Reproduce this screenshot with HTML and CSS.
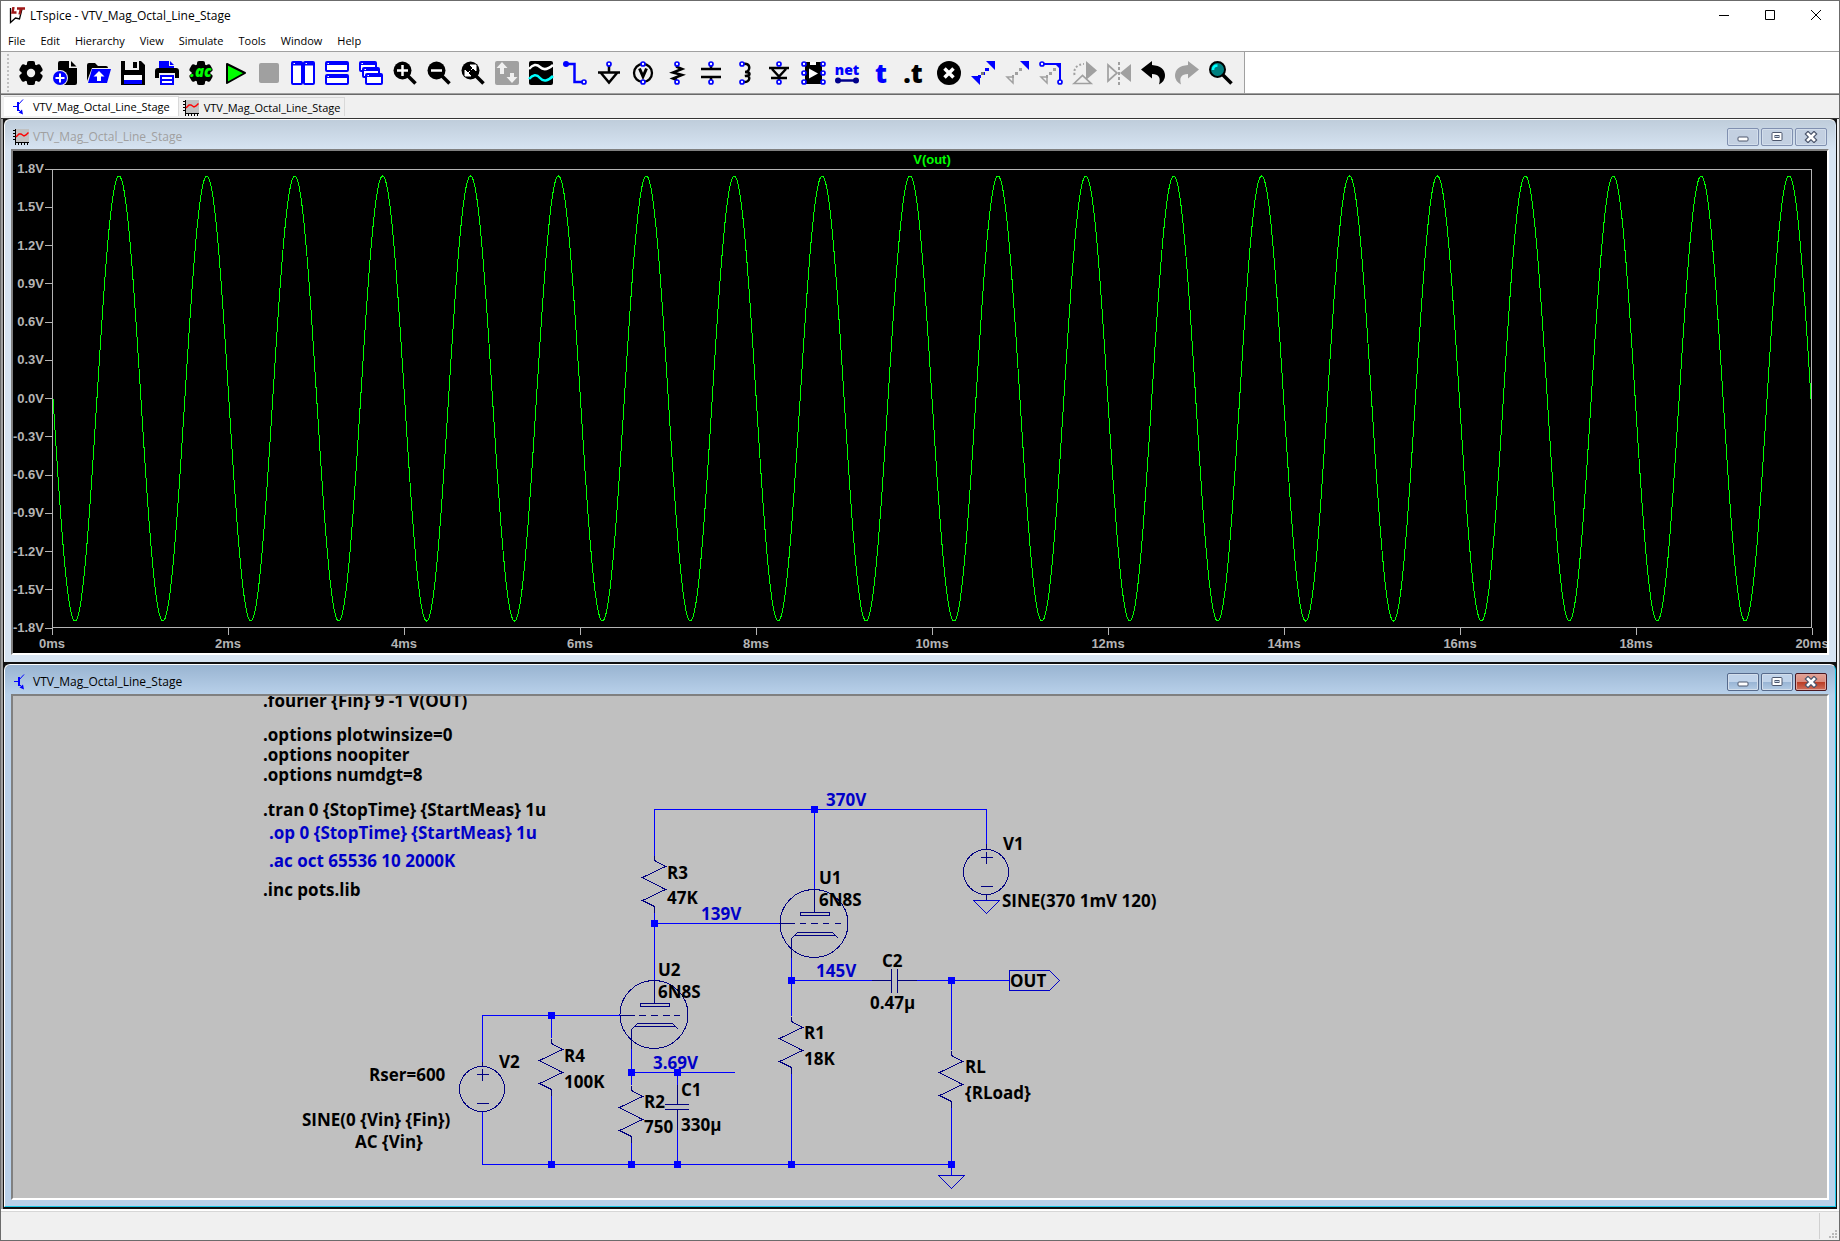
FILE: index.html
```html
<!DOCTYPE html>
<html lang="en">
<head>
<meta charset="utf-8">
<title>LTspice - VTV_Mag_Octal_Line_Stage</title>
<link rel="stylesheet" href="styles.css">
</head>
<body>
<svg class="defs" aria-hidden="true">
  <defs>
    <symbol id="i-schematic" viewBox="0 0 16 16"><path d="M1 7.500H5M5.500 3V12M5.500 6.500L11 .5M5.500 9.500L8 12" fill="none" stroke="#00f"/><path d="M5 3h2v9H5zM11 15.500L6.500 13.500L10 10.500z" fill="#00f"/></symbol>
    <symbol id="i-plot" viewBox="0 0 16 16"><path d="M2 0h14v13H2z" fill="#c0c0c0"/><path d="M2.500 0V16M2 13.500H16M0 1.500h2M0 4.500h2M0 7.500h2M0 10.500h2M5.500 14v2M8.500 14v2M11.500 14v2M14.500 14v2" stroke="#000" fill="none"/><path d="M3 8L6 5L8 5L11 7L13 6L15.500 3.500" stroke="#f00" stroke-width="1.500" fill="none"/></symbol>
    <symbol id="g-min" viewBox="0 0 14 12"><rect x="2" y="6" width="10" height="4" rx="1" fill="#fff" stroke="#4c566c"/></symbol>
    <symbol id="g-max" viewBox="0 0 14 12"><rect x="2" y="1.500" width="10" height="8" rx="1" fill="#fff" stroke="#4c566c"/><rect x="5" y="4.500" width="4" height="2" fill="#c8d6e8" stroke="#4c566c"/></symbol>
    <symbol id="g-close" viewBox="0 0 14 12"><path d="M4 3L10 9M10 3L4 9" stroke="#4c566c" stroke-width="5" stroke-linecap="square"/><path d="M4 3L10 9M10 3L4 9" stroke="#fff" stroke-width="2.600" stroke-linecap="square"/></symbol>
    <g id="s-res" class="part"><path d="M0 -5V0L11 6L-12 17L11 29L-12 40L0 46V52"/></g>
    <g id="s-src" class="part"><circle cx="0" cy="0" r="22.500"/><path d="M-5 -14.500H7M.5 -20V-8M-5 14.500H7"/></g>
    <g id="s-tube" class="part"><circle cx="0" cy="0" r="34"/><path d="M.5 -34V-11.500M-13.500 -11.500H15V-8H-13.500ZM-22.500 34V15L-16.500 9H18.500L24.500 15M-19.500 12H21.500"/></g>
    <rect id="s-node" x="-3.500" y="-3.500" width="7" height="7" fill="#00f"/>
    <g id="lens"><circle cx="9.500" cy="9.500" r="9"/><path d="M15 15L22.500 22.500" stroke="#000" stroke-width="3.500"/></g>
    <circle id="pin" r="2" fill="#fff" stroke="#00f" stroke-width="1.700"/>
  </defs>
</svg>
<div class="app">
  <header class="titlebar">
    <svg class="logo" viewBox="0 0 18 18"><path d="M2.500 1V15.500L7.500 11L11.500 12L14 2" fill="none" stroke="#000" stroke-width="1.300"/><path d="M5.500 0L4.500 5.500H8.500M9 1.500H17M13 1.500L11.500 7.500" fill="none" stroke="#a01818" stroke-width="2.400"/></svg>
    <h1>LTspice - VTV_Mag_Octal_Line_Stage</h1>
    <div class="caption">
      <button aria-label="Minimize"><svg viewBox="0 0 12 12"><path d="M1 6.500H11"/></svg></button>
      <button aria-label="Maximize"><svg viewBox="0 0 12 12"><path d="M1.500 1.500H10.500V10.500H1.500Z"/></svg></button>
      <button aria-label="Close"><svg viewBox="0 0 12 12"><path d="M1 1L11 11M11 1L1 11"/></svg></button>
    </div>
  </header>
  <nav class="menu">
    <button>File</button><button>Edit</button><button>Hierarchy</button><button>View</button><button>Simulate</button><button>Tools</button><button>Window</button><button>Help</button>
  </nav>
  <div class="toolrow">
    <div class="toolbar" role="toolbar">
      <button aria-label="Settings"><svg viewBox="0 0 24 24"><circle cx="12" cy="12" r="9.500"/><g><rect x="8" width="8" height="24" rx="2"/><rect x="8" width="8" height="24" rx="2" transform="rotate(60 12 12)"/><rect x="8" width="8" height="24" rx="2" transform="rotate(120 12 12)"/></g><circle cx="12" cy="12" r="4.200" fill="#f0f0f0"/></svg></button>
      <button aria-label="New schematic"><svg viewBox="0 0 24 24"><path d="M5 2Q5 0 7 0H16V7H24V22Q24 24 22 24H7L5 20Z"/><path d="M18 0L23.500 5.500H18Z"/><circle cx="7" cy="17" r="8" fill="#f0f0f0"/><circle cx="7" cy="17" r="7" fill="#00f"/><path d="M7 12.500V21.500M2.500 17H11.500" stroke="#fff" stroke-width="2"/></svg></button>
      <button aria-label="Open"><svg viewBox="0 0 24 24"><path d="M0 20V4Q0 2 2 2H8L11 5H19Q21 5 21 7H5Z"/><path d="M5 8H24L20 22H1Z" fill="#00f"/><path d="M12 10L17.500 15.500H14V20H10V15.500H6.500Z" fill="#fff"/></svg></button>
      <button aria-label="Save"><svg viewBox="0 0 24 24"><path d="M0 0H20L24 4V24H0Z"/><path d="M4 0H18V9H4Z" fill="#f0f0f0"/><path d="M12 1H16V7H12Z"/><path d="M3 14H21V22H3Z" fill="#fff"/><path d="M3 19H21V23H3Z" fill="#00f"/></svg></button>
      <button aria-label="Print"><svg viewBox="0 0 24 24"><path d="M4 0H14V5H19V7H4ZM15 0L19 4H15Z" fill="#00f"/><path d="M0 10Q0 7 3 7H21Q24 7 24 10V17H20V12H4V17H0Z"/><rect x="5" y="14" width="14" height="10" fill="#00f"/><path d="M7 17H17M7 21H17" stroke="#fff" stroke-width="2"/></svg></button>
      <button aria-label="AC analysis"><svg viewBox="0 0 24 24"><circle cx="12" cy="12" r="9.500"/><rect x="8" width="8" height="24" rx="2"/><rect x="8" width="8" height="24" rx="2" transform="rotate(60 12 12)"/><rect x="8" width="8" height="24" rx="2" transform="rotate(120 12 12)"/><text class="ac" x="12" y="16">.ac</text></svg></button>
      <button aria-label="Run"><svg viewBox="0 0 24 24"><path d="M4 3L22 12L4 22Z" fill="#0f0" stroke="#000" stroke-width="2" stroke-linejoin="round"/></svg></button>
      <button aria-label="Stop" disabled><svg viewBox="0 0 24 24"><rect x="2" y="2" width="20" height="20" rx="2" fill="#a0a0a0"/></svg></button>
      <button aria-label="Tile vertically"><svg viewBox="0 0 24 24"><g class="win"><rect x="1" y="1" width="10" height="22" rx="1"/><rect x="13" y="1" width="10" height="22" rx="1"/></g><path d="M1 3H23" stroke="#00f" stroke-width="3"/><path d="M2.500 2.500H4M14.500 2.500H16" stroke="#fff"/></svg></button>
      <button aria-label="Tile horizontally"><svg viewBox="0 0 24 24"><g class="win"><rect x="1" y="1" width="22" height="9" rx="1"/><rect x="1" y="14" width="22" height="9" rx="1"/></g><path d="M1 2.500H23M1 15.500H23" stroke="#00f" stroke-width="3"/><path d="M2.500 2.500H4M2.500 15.500H4" stroke="#fff"/></svg></button>
      <button aria-label="Cascade"><svg viewBox="0 0 24 24"><g class="win"><rect x="1" y="1" width="16" height="9" rx="1"/><rect x="4" y="7" width="16" height="9" rx="1"/><rect x="7" y="13" width="16" height="10" rx="1"/></g><path d="M1 2.500H17M4 8.500H20M7 14.500H23" stroke="#00f" stroke-width="3"/><path d="M2.500 2.500H4M5.500 8.500H7M8.500 14.500H10" stroke="#fff"/></svg></button>
      <button aria-label="Zoom in"><svg viewBox="0 0 24 24"><use href="#lens"/><path d="M9.500 4V15M4 9.500H15" stroke="#fff" stroke-width="2.500"/></svg></button>
      <button aria-label="Zoom out"><svg viewBox="0 0 24 24"><use href="#lens"/><path d="M4 9.500H15" stroke="#fff" stroke-width="2.500"/></svg></button>
      <button aria-label="Zoom to fit"><svg viewBox="0 0 24 24"><use href="#lens"/><path d="M9 4H15V10ZM4 9V15H10ZM6 13L13 6" fill="#fff" stroke="#fff"/><path d="M8 8L11 11" stroke="#000" stroke-width="1.500"/></svg></button>
      <button aria-label="Autorange" disabled><svg viewBox="0 0 24 24"><rect width="24" height="24" rx="2" fill="#a0a0a0"/><path d="M7 1L12.500 7H9V13H5V7H1.500ZM17 22L22.500 16H19V12H15V16H11.500Z" fill="#f0f0f0"/></svg></button>
      <button aria-label="Waveforms"><svg viewBox="0 0 24 24"><rect width="24" height="24" rx="2"/><path d="M0 8Q6 1 11 6T24 4" fill="none" stroke="#fff" stroke-width="2.500"/><path d="M0 18Q6 11 11 17T24 15" fill="none" stroke="#0ff" stroke-width="2.500"/></svg></button>
      <button aria-label="Wire"><svg viewBox="0 0 24 24"><path d="M3 3H11.500V21H20" fill="none" stroke="#00f" stroke-width="2.500"/><circle cx="3" cy="3" r="3" fill="#00f"/><use href="#pin" x="21" y="21"/></svg></button>
      <button aria-label="Ground"><svg viewBox="0 0 24 24"><path d="M12 4V12M1 11.500H23M4 12L12 21.500L20 12" fill="none" stroke="#000" stroke-width="2.500"/><use href="#pin" x="12" y="3"/></svg></button>
      <button aria-label="Voltage source"><svg viewBox="0 0 24 24"><circle cx="12" cy="12" r="9" fill="none" stroke="#000" stroke-width="2.300"/><path d="M8.500 7.500L12 15.500L15.500 7.500" fill="none" stroke="#000" stroke-width="3"/><use href="#pin" x="12" y="3"/><use href="#pin" x="12" y="21"/></svg></button>
      <button aria-label="Resistor"><svg viewBox="0 0 24 24"><path d="M12 4V6L17 8L8 11.500L17 14L8 17.500L12 19" fill="none" stroke="#000" stroke-width="2.500"/><use href="#pin" x="12" y="3"/><use href="#pin" x="12" y="21"/></svg></button>
      <button aria-label="Capacitor"><svg viewBox="0 0 24 24"><path d="M2 8H22M2 16H22M12 5V8M12 16V19" stroke="#000" stroke-width="2.500"/><use href="#pin" x="12" y="3"/><use href="#pin" x="12" y="21"/></svg></button>
      <button aria-label="Inductor"><svg viewBox="0 0 24 24"><path d="M10 3C18 1 18 11 12 11C18 11 18 15 12 15C18 13 18 22 10 21" fill="none" stroke="#000" stroke-width="2.500"/><use href="#pin" x="9" y="3"/><use href="#pin" x="9" y="21"/></svg></button>
      <button aria-label="Diode"><svg viewBox="0 0 24 24"><path d="M2 7H22M5 8L12 15.500L19 8M4 17H20M12 15V19" fill="none" stroke="#000" stroke-width="2.500"/><use href="#pin" x="12" y="3"/><use href="#pin" x="12" y="21"/></svg></button>
      <button aria-label="Component"><svg viewBox="0 0 24 24"><rect x="4" y="1" width="17" height="22"/><path d="M9 1V4H15V1" fill="#fff"/><path d="M8 7.500L17 12.500L8 17.500Z" fill="#fff"/><g><use href="#pin" x="3" y="3"/><use href="#pin" x="3" y="12"/><use href="#pin" x="3" y="21"/><use href="#pin" x="22" y="3"/><use href="#pin" x="22" y="12"/><use href="#pin" x="22" y="21"/></g></svg></button>
      <button aria-label="Label net"><svg viewBox="0 0 24 24"><text class="net" x="12" y="14">net</text><path d="M2 19.500H22" stroke="#00008b" stroke-width="2.500"/><circle cx="3" cy="19.500" r="3" fill="#00008b"/><circle cx="21" cy="19.500" r="3" fill="#00008b"/></svg></button>
      <button aria-label="Text"><svg viewBox="0 0 24 24"><text class="t blue" x="12" y="22">t</text></svg></button>
      <button aria-label="SPICE directive"><svg viewBox="0 0 24 24"><text class="t" x="10" y="22">.t</text></svg></button>
      <button aria-label="Delete"><svg viewBox="0 0 24 24"><circle cx="12" cy="12" r="12"/><path d="M7.500 7.500L16.500 16.500M16.500 7.500L7.500 16.500" stroke="#fff" stroke-width="3.500"/></svg></button>
      <button aria-label="Move"><svg viewBox="0 0 24 24"><path d="M15 0H24V9ZM0 15H9V24Z" fill="#00f"/><path d="M10 11H14V14H10ZM14 7H18V10H14ZM7 14H10V17H7Z" fill="#00f"/><path d="M10 11H13V14H10Z" fill="#777"/></svg></button>
      <button aria-label="Duplicate"><svg viewBox="0 0 24 24"><path d="M15 0H24V9Z" fill="#00f"/><path d="M14 7H17V10H14ZM10 11H13V14H10ZM7 14H9V17H7Z" fill="#a0a0a0"/><path d="M2 16H8V22Z" fill="none" stroke="#a0a0a0" stroke-width="1.500"/></svg></button>
      <button aria-label="Drag"><svg viewBox="0 0 24 24"><path d="M3 3H21V20" fill="none" stroke="#00f" stroke-width="2"/><path d="M15 2H22V9Z" fill="#00f"/><path d="M14 7H17V10H14ZM10 11H13V14H10ZM7 14H9V17H7Z" fill="#a0a0a0"/><path d="M2 16H8V22Z" fill="none" stroke="#a0a0a0" stroke-width="1.500"/><use href="#pin" x="3" y="3"/><use href="#pin" x="21" y="21"/></svg></button>
      <button aria-label="Rotate" disabled><svg viewBox="0 0 24 24"><path d="M13 0L24 9.500L13 19Z" fill="#a0a0a0"/><path d="M1.500 14Q0 4 11 3" fill="none" stroke="#a0a0a0" stroke-width="2" stroke-dasharray="2 2"/><path d="M1 22.500L9.500 14.500L18 22.500Z" fill="#f0f0f0" stroke="#a0a0a0" stroke-width="1.700"/></svg></button>
      <button aria-label="Mirror" disabled><svg viewBox="0 0 24 24"><path d="M24 3V21L13 12Z" fill="#a0a0a0"/><path d="M1 4V20L10 12Z" fill="none" stroke="#a0a0a0" stroke-width="1.700"/><path d="M12 1V24" stroke="#a0a0a0" stroke-width="2" stroke-dasharray="3 2"/></svg></button>
      <button aria-label="Undo"><svg viewBox="0 0 24 24"><path d="M0 8.500L11 0V4Q24 5 24 15Q24 20 18 23.500Q21 13 11 13V17.500Z"/></svg></button>
      <button aria-label="Redo" disabled><svg viewBox="0 0 24 24"><path d="M24 8.500L13 0V4Q0 5 0 15Q0 20 6 23.500Q3 13 13 13V17.500Z" fill="#a0a0a0"/></svg></button>
      <button aria-label="Search"><svg viewBox="0 0 24 24"><circle cx="8.500" cy="8.500" r="7.500" fill="#008080" stroke="#000" stroke-width="2"/><path d="M4 9Q4 4.500 8.500 4.500" fill="none" stroke="#0ff" stroke-width="2.500"/><path d="M14 14L22.500 22.500" stroke="#000" stroke-width="3.500"/></svg></button>
    </div>
  </div>
  <div class="tabs" role="tablist">
    <button class="tab active" role="tab" aria-selected="true"><svg class="doc"><use href="#i-schematic"/></svg>VTV_Mag_Octal_Line_Stage</button>
    <button class="tab" role="tab" aria-selected="false"><svg class="doc"><use href="#i-plot"/></svg>VTV_Mag_Octal_Line_Stage</button>
  </div>
  <main class="mdi">
    <section class="child">
      <header class="child-title">
        <svg class="doc"><use href="#i-plot"/></svg><h2>VTV_Mag_Octal_Line_Stage</h2>
        <button aria-label="Minimize"><svg><use href="#g-min"/></svg></button>
        <button aria-label="Maximize"><svg><use href="#g-max"/></svg></button>
        <button aria-label="Close"><svg><use href="#g-close"/></svg></button>
      </header>
      <div class="client wave">
        <div class="trace-name">V(out)</div>
        <div class="y-axis"><span>1.8V</span><span>1.5V</span><span>1.2V</span><span>0.9V</span><span>0.6V</span><span>0.3V</span><span>0.0V</span><span>-0.3V</span><span>-0.6V</span><span>-0.9V</span><span>-1.2V</span><span>-1.5V</span><span>-1.8V</span></div>
        <div class="plot"><svg viewBox="0 0 2000 458" preserveAspectRatio="none"><polyline id="trace" points=""/></svg></div>
        <div class="x-axis"><span>0ms</span><span>2ms</span><span>4ms</span><span>6ms</span><span>8ms</span><span>10ms</span><span>12ms</span><span>14ms</span><span>16ms</span><span>18ms</span><span>20ms</span></div>
      </div>
    </section>
    <section class="child focused">
      <header class="child-title">
        <svg class="doc"><use href="#i-schematic"/></svg><h2>VTV_Mag_Octal_Line_Stage</h2>
        <button aria-label="Minimize"><svg><use href="#g-min"/></svg></button>
        <button aria-label="Maximize"><svg><use href="#g-max"/></svg></button>
        <button class="close" aria-label="Close"><svg><use href="#g-close"/></svg></button>
      </header>
      <div class="client sheet">
        <svg class="circuit"><g transform="translate(-13 -696)">
          <path class="wire" d="M654.500 856V809.500H986.500V844M814.500 809.500V889M654.500 911V980M654.500 923.500H780M791.500 958V1016M791.500 1074V1164.500M791.500 980.500H872M917 980.500H1009M951.500 980.500V1050M951.500 1107V1175.500M631.500 1048V1085M631.500 1142V1164.500M631.500 1072.500H735M677.500 1072.500V1085M677.500 1130V1164.500M482.500 1062V1015.500H620M551.500 1015.500V1038M551.500 1095V1164.500M482.500 1112V1164.500H951.500"/>
          <path class="flag" d="M1009.500 970.500H1049.500L1059.500 980.500L1049.500 990.500H1009.500ZM938.500 1175.500H964.500L951.500 1188.500ZM973.500 900.500H999.500L986.500 913.500Z"/>
          <path class="part" d="M986.500 844V849M986.500 894V900M482.500 1062V1066M872 980.500H891.500M897.500 980.500H917M891.500 969V993M897.500 969V993M677.500 1085V1104.500M677.500 1109.500V1130M665 1104.500H689M665 1109.500H689"/>
          <path class="part" d="M780 923.500H795M800 923.500H806M811 923.500H818M823 923.500H829M835 923.500H841M620 1015.500H635M639 1015.500H646M651 1015.500H658M663 1015.500H670M674 1015.500H680"/>
          <use href="#s-res" x="654.500" y="860.500"/><use href="#s-res" x="631.500" y="1090.500"/><use href="#s-res" x="791.500" y="1021.500"/><use href="#s-res" x="951.500" y="1055.500"/><use href="#s-res" x="551.500" y="1043.500"/>
          <use href="#s-src" x="986" y="872"/><use href="#s-src" x="482" y="1089"/>
          <use href="#s-tube" x="814" y="923.500"/><use href="#s-tube" x="654" y="1014.500"/>
          <use href="#s-node" x="814.500" y="809.500"/><use href="#s-node" x="654.500" y="923.500"/><use href="#s-node" x="791.500" y="980.500"/><use href="#s-node" x="951.500" y="980.500"/><use href="#s-node" x="551.500" y="1015.500"/><use href="#s-node" x="631.500" y="1072.500"/><use href="#s-node" x="677.500" y="1072.500"/><use href="#s-node" x="551.500" y="1164.500"/><use href="#s-node" x="631.500" y="1164.500"/><use href="#s-node" x="677.500" y="1164.500"/><use href="#s-node" x="791.500" y="1164.500"/><use href="#s-node" x="951.500" y="1164.500"/>
          <g class="label">
            <text x="263" y="707">.fourier {Fin} 9 -1 V(OUT)</text>
            <text x="263" y="741">.options plotwinsize=0</text>
            <text x="263" y="761">.options noopiter</text>
            <text x="263" y="781">.options numdgt=8</text>
            <text x="263" y="816">.tran 0 {StopTime} {StartMeas} 1u</text>
            <text x="263" y="896">.inc pots.lib</text>
            <text x="667" y="879">R3</text><text x="667" y="904">47K</text>
            <text x="819" y="884">U1</text><text x="819" y="906">6N8S</text>
            <text x="1003" y="850">V1</text><text x="1002" y="907">SINE(370 1mV 120)</text>
            <text x="658" y="976">U2</text><text x="658" y="998">6N8S</text>
            <text x="882" y="967">C2</text><text x="870" y="1009">0.47µ</text>
            <text x="1010" y="987">OUT</text>
            <text x="804" y="1039">R1</text><text x="804" y="1065">18K</text>
            <text x="965" y="1073">RL</text><text x="965" y="1099">{RLoad}</text>
            <text x="681" y="1096">C1</text><text x="681" y="1131">330µ</text>
            <text x="644" y="1108">R2</text><text x="644" y="1133">750</text>
            <text x="499" y="1068">V2</text><text x="369" y="1081">Rser=600</text>
            <text x="302" y="1126">SINE(0 {Vin} {Fin})</text><text x="355" y="1148">AC {Vin}</text>
            <text x="564" y="1062">R4</text><text x="564" y="1088">100K</text>
          </g>
          <g class="label note">
            <text x="269" y="839">.op 0 {StopTime} {StartMeas} 1u</text>
            <text x="269" y="867">.ac oct 65536 10 2000K</text>
            <text x="826" y="806">370V</text><text x="701" y="920">139V</text><text x="816" y="977">145V</text><text x="653" y="1069">3.69V</text>
          </g>
        </g></svg>
      </div>
    </section>
  </main>
  <footer class="status"><div class="grip"><svg viewBox="0 0 9 9"><path d="M6 0h2v2H6zM3 3h2v2H3zM6 3h2v2H6zM0 6h2v2H0zM3 6h2v2H3zM6 6h2v2H6z" fill="#b8b8b8"/></svg></div></footer>
</div>
<script src="script.js"></script>
</body>
</html>
```
FILE: styles.css
```css
* { box-sizing: border-box; }
body { margin: 0; background: #fff; color: #000; font: 12px/16px "Open Sans", "Noto Sans", sans-serif; }
button { font: inherit; color: inherit; padding: 0; border: 0; background: none; }
h1, h2 { margin: 0; font: inherit; }
svg { display: block; flex: none; }
.defs { position: absolute; width: 0; height: 0; }

.app { display: flex; flex-direction: column; min-height: 100vh; border: 1px solid #6b6b6b; }

.titlebar { display: flex; align-items: center; height: 29px; padding-left: 7px; }
.logo { width: 18px; height: 18px; margin-right: 4px; }
.caption { display: flex; margin-left: auto; align-self: flex-start; }
.caption button { display: flex; align-items: center; justify-content: center; width: 46px; height: 28px; }
.caption svg { width: 12px; height: 12px; fill: none; stroke: #000; }

.menu { display: flex; align-items: center; gap: 15px; height: 22px; padding: 0 7px; border-bottom: 1px solid #a0a0a0; font-size: 11px; }

.toolrow { border-bottom: 1px solid #696969; box-shadow: inset 0 -1px #a0a0a0; }
.toolbar { display: flex; width: fit-content; height: 42px; padding: 1px 6px 0 13px; background: radial-gradient(circle at 1px 1px, #b8b8b8 1px, transparent 1px) 0 0 / 2px 4px no-repeat, #f0f0f0; border-right: 1px solid #a0a0a0; border-bottom: 1px solid #a0a0a0; }
.toolbar { background: linear-gradient(#f0f0f0, #f0f0f0) 0 0 / 6px 100% no-repeat, linear-gradient(#f0f0f0, #f0f0f0) 8px 0 / 100% 100% no-repeat, repeating-linear-gradient(#f0f0f0 0 2px, #c0c0c0 2px 4px); }
.toolbar button { display: grid; place-items: center; width: 34px; }
.toolbar svg { width: 24px; height: 24px; overflow: visible; }
.toolbar text { text-anchor: middle; font-family: "Open Sans", sans-serif; font-weight: 800; }
.toolbar .ac { font-size: 15px; font-style: italic; fill: #0f0; }
.toolbar .net { font-size: 14px; fill: #00f; }
.toolbar .t { font-size: 26px; }
.toolbar .blue { fill: #00f; }
.win rect { fill: #fff; stroke: #00f; stroke-width: 2; }

.tabs { display: flex; align-items: flex-end; height: 24px; padding: 0 0 2px 3px; background: #f0f0f0; border-bottom: 1px solid #333; font-size: 11px; }
.tab { display: flex; align-items: center; gap: 5px; height: 19px; padding: 1px 4px 0; border: 1px solid #d9d9d9; border-width: 1px 1px 0 0; }
.tab.active { height: 20px; padding: 0 8px; background: #fff; }
.doc { width: 16px; height: 16px; }

.mdi { flex: 1; display: flex; flex-direction: column; background: #111; border: 2px solid #a0a0a0; border-width: 0 2px 0 2px; border-right-color: #f0f0f0; padding: 0 1px 2px; gap: 2px; }
.child { flex: 1 1 0; display: flex; flex-direction: column; min-height: 300px; padding: 0 6px 6px; border: 1px solid #fff; border-right-color: #d7e4f2; border-bottom-color: #d7e4f2; border-radius: 6px 6px 0 0; background: linear-gradient(#bfcddb, #d7e4f2 30px); color: #a0a0a0; }
.child.focused { background: linear-gradient(#99b4d1, #b9d1ea 30px); border-right-color: #1cc8e8; border-bottom-color: #1cc8e8; color: #000; }
.child-title { display: flex; align-items: center; gap: 2px; height: 29px; padding: 7px 2px 2px; }
.child-title h2 { flex: 1; padding-left: 2px; }
.child-title button { display: grid; place-items: center; width: 32px; height: 18px; border: 1px solid #8090b0; border-radius: 2px; box-shadow: inset 0 0 0 1px #d3deeb; background: #c3d0e1; }
.child-title button svg { width: 14px; height: 12px; }
.focused .child-title button { border-color: #566a8c; background: linear-gradient(#c0d3ea 50%, #98b4d4 50%, #b4cbe4); }
.focused .child-title .close { border-color: #4a1720; box-shadow: inset 0 0 0 1px #e0a49a; background: linear-gradient(#e3a296, #d98a7c 50%, #b93a22 50%, #d0705c); }
.client { flex: 1; border: 2px solid; border-color: #808080 #fff #fff #808080; overflow: hidden; }

.wave { display: grid; grid-template-columns: 39px 1fr 15px; grid-template-rows: 18px 1fr 25px; background: #000; color: #b4b4b4; font: bold 13px/14px "Liberation Sans", Arial, sans-serif; }
.trace-name { grid-column: 2; text-align: center; padding-top: 2px; color: #0f0; }
.y-axis { grid-column: 1; grid-row: 2; display: flex; flex-direction: column; justify-content: space-between; align-items: flex-end; margin: -7px 0; }
.y-axis span { display: flex; align-items: center; gap: 1px; }
.y-axis span::after { content: ""; width: 7px; height: 1px; background: #b4b4b4; }
.plot { grid-column: 2; grid-row: 2; border: 1px solid #b4b4b4; position: relative; }
.plot svg { position: absolute; inset: 0; width: 100%; height: 100%; }
.plot polyline { fill: none; stroke: #0f0; vector-effect: non-scaling-stroke; shape-rendering: crispEdges; }
.x-axis { grid-column: 2; grid-row: 3; display: flex; justify-content: space-between; }
.x-axis span { display: flex; flex-direction: column; align-items: center; gap: 2px; width: 0; }
.x-axis span::before { content: ""; width: 1px; height: 7px; background: #b4b4b4; }

.sheet { display: flex; background: #c0c0c0; }
.circuit { flex: 1; height: auto; min-height: 496px; }
.wire, .flag, .part { fill: none; stroke: #00f; shape-rendering: crispEdges; }
.flag { stroke: #0000c8; }
.part { stroke: #000080; }
.label { font: bold 17px "Open Sans", "Noto Sans", sans-serif; fill: #000; }
.note { fill: #0000c8; }

.status { display: flex; justify-content: flex-end; height: 31px; background: #f0f0f0; border-top: 2px solid #fff; box-shadow: inset 0 1px #d7d7d7; padding: 2px 1px 1px; }
.grip { display: flex; align-items: flex-end; justify-content: flex-end; width: 19px; border-left: 1px solid #d0d0d0; }
.grip svg { width: 9px; height: 9px; }
```
FILE: script.js
```js
// 1 kHz output trace: 20 cycles, 1.75 V peak on a +/-1.8 V scale
const STEPS = 4000, CYCLES = 20, MID = 229, PEAK = 223;
const points = [];
for (let i = 0; i <= STEPS; i++) {
  const y = MID + PEAK * Math.sin((2 * Math.PI * CYCLES * i) / STEPS);
  points.push((i / STEPS) * 2000 + "," + y.toFixed(2));
}
document.getElementById("trace").setAttribute("points", points.join(" "));
```
